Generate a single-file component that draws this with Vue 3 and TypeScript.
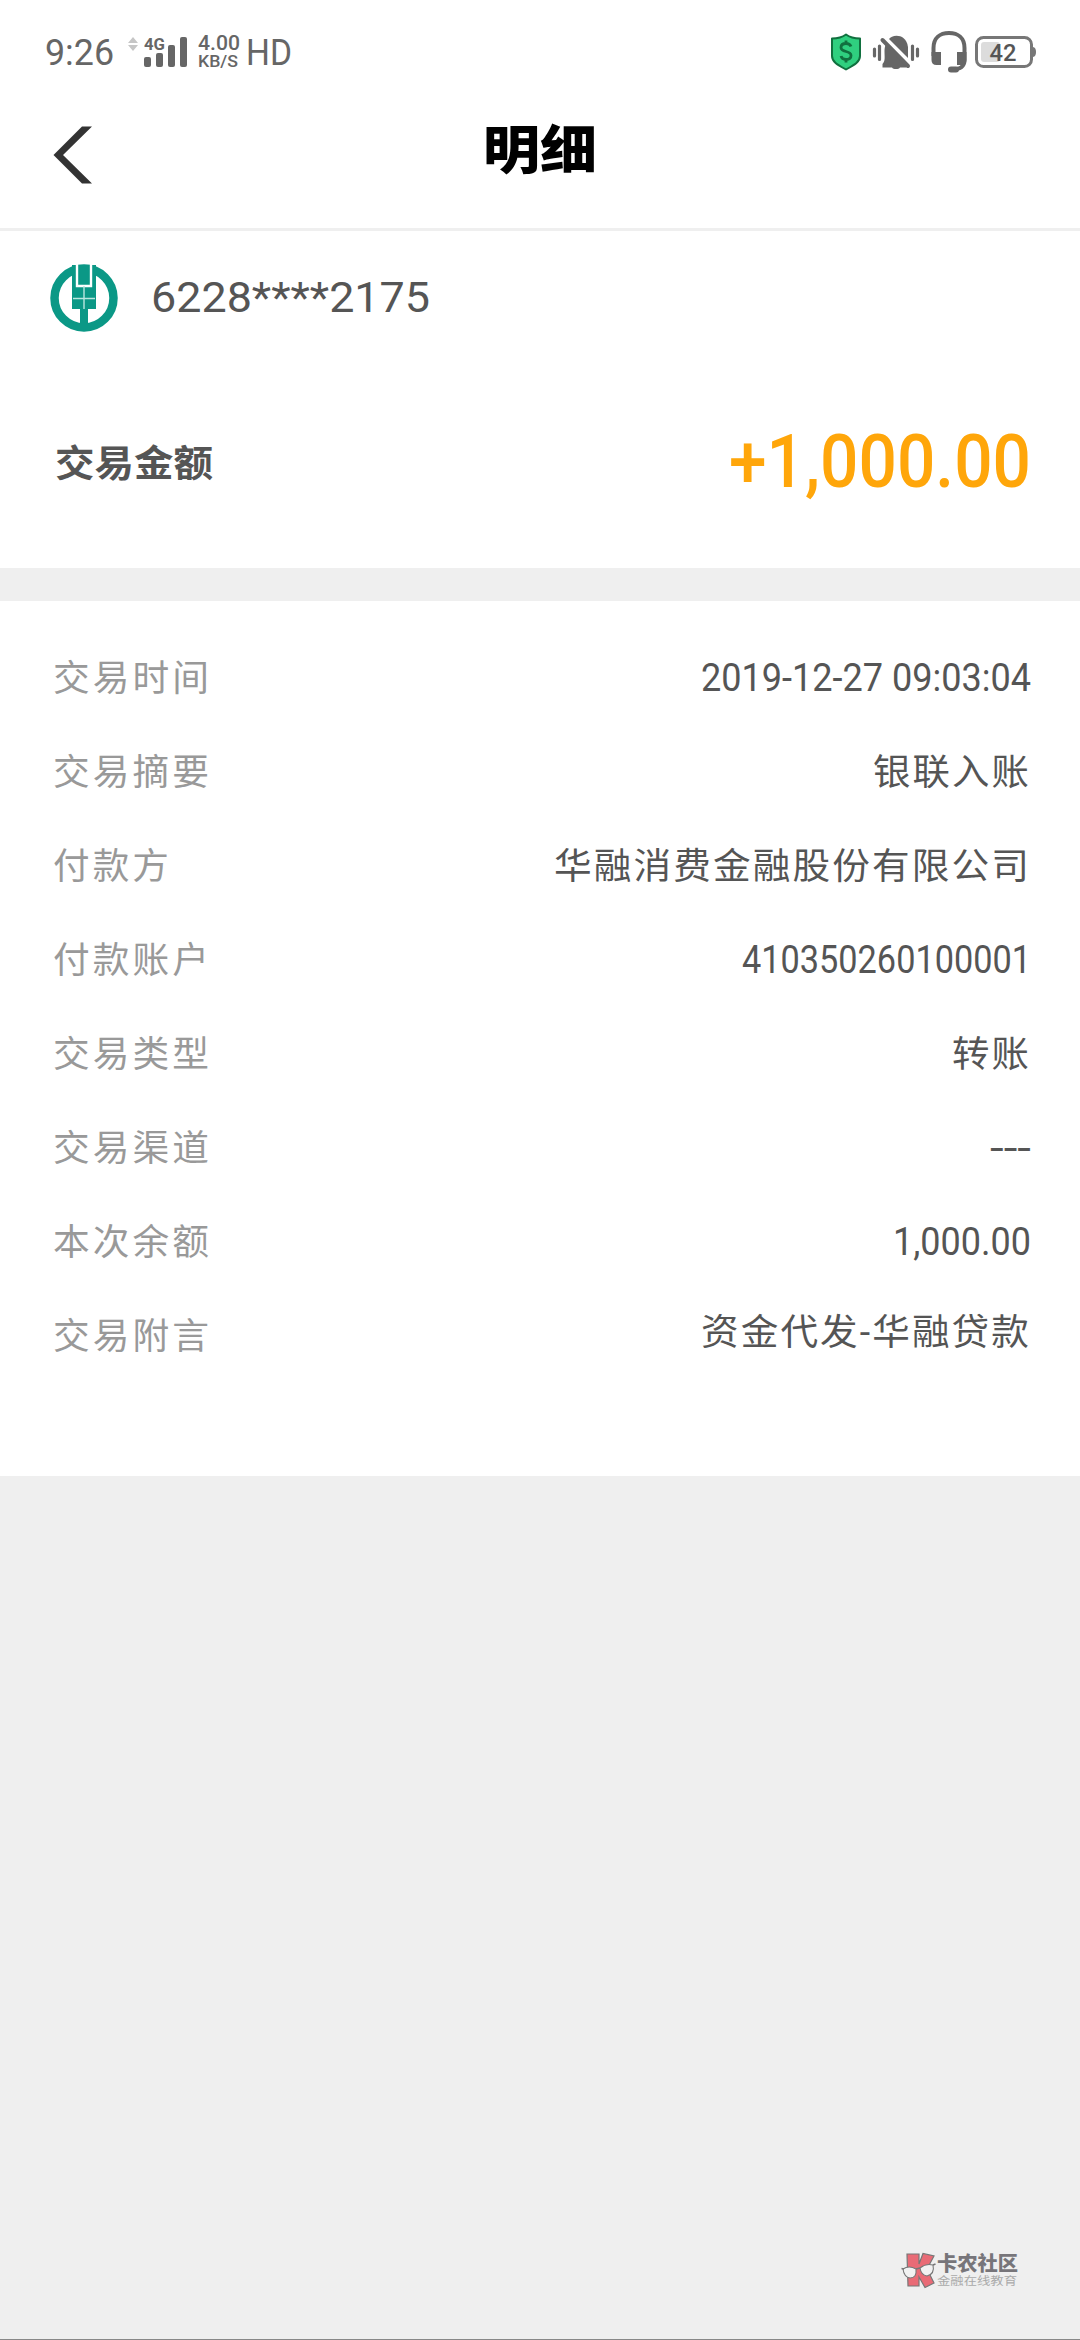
<script setup lang="ts">
import type { Directive } from 'vue'

interface Row {
  label: string
  labelWidth: number
  value: string
  width: number
  numeric?: boolean
  raised?: boolean
}

const rows: Row[] = [
  { label: '交易时间', labelWidth: 159, value: '2019-12-27 09:03:04', width: 330, numeric: true },
  { label: '交易摘要', labelWidth: 159, value: '银联入账', width: 158 },
  { label: '付款方', labelWidth: 119, value: '华融消费金融股份有限公司', width: 477 },
  { label: '付款账户', labelWidth: 159, value: '410350260100001', width: 289, numeric: true },
  { label: '交易类型', labelWidth: 159, value: '转账', width: 79 },
  { label: '交易渠道', labelWidth: 159, value: '---', width: 41, numeric: true },
  { label: '本次余额', labelWidth: 159, value: '1,000.00', width: 138, numeric: true },
  { label: '交易附言', labelWidth: 159, value: '资金代发-华融贷款', width: 330, raised: true },
]

// Condenses or widens a run of text so that it occupies the given width.
const vFit: Directive<HTMLElement, number> = {
  mounted(el, { value }) {
    const natural = el.getBoundingClientRect().width
    el.style.transformOrigin = 'left center'
    el.style.transform = `scaleX(${value / natural})`
    el.style.marginRight = `${value - natural}px`
  },
}
</script>

<template>
  <div class="screen">
    <header class="status">
      <div class="status-left">
        <span v-fit="69" class="clock">9:26</span>
        <svg class="arrows" width="12" height="34" viewBox="0 0 12 34">
          <path d="M1 8L6 2L11 8ZM1 10L6 16L11 10Z" fill="#c6c6c6" />
        </svg>
        <div class="signal">
          <span v-fit="21" class="network">4G</span>
          <svg width="45" height="32" viewBox="0 0 45 32">
            <rect x="0" y="21" width="7" height="10" rx="2" />
            <rect x="12" y="17" width="7" height="14" rx="2" />
            <rect x="24" y="9" width="7" height="22" rx="2" />
            <rect x="36" y="1" width="7" height="30" rx="2" />
          </svg>
        </div>
        <div class="speed">
          <span v-fit="42" class="rate">4.00</span>
          <span v-fit="40" class="unit">KB/S</span>
        </div>
        <span v-fit="46" class="hd">HD</span>
      </div>
      <div class="status-right">
        <svg width="32" height="38" viewBox="0 0 32 38">
          <path d="M16 1.5C20 4.5 25 5.500 30 5.500V23C30 29 24 32 16 36.500C8 32 2 29 2 23V5.500C7 5.500 12 4.500 16 1.500Z" fill="#2fcf7f" stroke="#11703f" stroke-width="2" stroke-linejoin="round" />
          <path d="M21 13.500C20 11 18 10.500 16 10.500C13 10.500 11 12 11 14.500C11 20 21 17 21 22.500C21 25 19 26.500 16 26.500C13 26.500 11.500 25 11 23M16 7.500V11M16 26V29.500" fill="none" stroke="#11703f" stroke-width="2.800" />
        </svg>
        <svg class="bell" width="48" height="38" viewBox="0 0 48 38">
          <path d="M10 7L37 33L34 34.500H28C27 36.500 21 36.500 20 34.500H10.500V31C13.500 28 12.500 24 12.500 18C12.500 15 13 13 14 11Z" fill="#666" />
          <path d="M17 6C20 1.500 34 0 36 14V25Z" fill="#666" />
          <path d="M10.500 7L36 33" stroke="#666" stroke-width="4" stroke-linecap="round" />
          <path d="M2.500 16V23M7.500 13V26.500M40.500 13V26.500M45.500 16V23" stroke="#666" stroke-width="3.200" stroke-linecap="round" />
        </svg>
        <svg class="headset" width="38" height="44" viewBox="0 0 38 44">
          <path d="M3.500 26V18C3.500 8 10 3 19 3S34.500 8 34.500 18V30C34.500 37 30 39.500 21 39.500" fill="none" stroke="#666" stroke-width="4" />
          <path d="M1.500 22H11V35H6.500Q1.500 35 1.500 30ZM27 22H36.500V30Q36.500 35 31.500 35H27Z" fill="#666" />
          <rect x="18" y="36.500" width="11" height="6" rx="3" fill="#666" />
        </svg>
        <svg class="battery" width="62" height="34" viewBox="0 0 62 34">
          <rect x="1.500" y="2.500" width="55" height="29" rx="7" fill="none" stroke="#777" stroke-width="3" />
          <path d="M58 12Q61 12.500 61 17T58 22Z" fill="#777" />
          <rect x="6" y="7" width="19" height="20" rx="3" fill="#dcdcdc" />
          <text x="14.500" y="25.500" font-size="24" font-weight="500" textLength="27" lengthAdjust="spacingAndGlyphs" fill="#555">42</text>
        </svg>
      </div>
    </header>

    <nav class="nav">
      <svg class="back" width="40" height="58" viewBox="0 0 40 58">
        <path d="M29 .5H39L10 29L39 57.500H29L.5 29Z" fill="#333" />
      </svg>
      <h1 v-fit="114">明细</h1>
    </nav>

    <section class="account">
      <div class="card">
        <svg width="68" height="68" viewBox="0 0 68 68">
          <circle cx="34" cy="34" r="29.500" fill="#fff" stroke="#0b9886" stroke-width="8.500" />
          <path d="M22 1H46V45H38V63H30V45H22Z" fill="#0b9886" />
          <path d="M27 0V22H41V0" fill="none" stroke="#fff" stroke-width="2.400" />
          <path d="M34 22V45M23 34.500H45" fill="none" stroke="#b9e6df" stroke-width="1.400" />
        </svg>
        <span v-fit="279" class="card-number">6228****2175</span>
      </div>
      <div class="amount">
        <span v-fit="158" class="amount-label">交易金额</span>
        <span v-fit="302" class="amount-value">+1,000.00</span>
      </div>
    </section>

    <section class="details">
      <div v-for="row in rows" :key="row.label" class="row">
        <span v-fit="row.labelWidth" class="label">{{ row.label }}</span>
        <span v-fit="row.width" class="value" :class="{ numeric: row.numeric, raised: row.raised }">{{ row.value }}</span>
      </div>
    </section>

    <footer class="footer">
      <div class="brand">
        <svg width="36" height="37" viewBox="0 0 36 37">
          <path d="M6 2H18V12L22 1.500L33 4L26 17L33 31L24 35.500L18 25V34H7Z" fill="#e96b76" stroke="#777" stroke-width="1.200" />
          <path d="M2 17Q8 13 15 17Q16 26 9 26Q3 25 2 17ZM19 16Q25 11 32 13Q34 22 26 24Q20 23 19 16Z" fill="#f2f2f2" stroke="#777" stroke-width="1.100" />
          <path d="M.5 16.500L3 17M15 17L19 16M32 13L34.500 12" stroke="#777" stroke-width="1.500" />
        </svg>
        <div class="brand-text">
          <span v-fit="81" class="brand-name">卡农社区</span>
          <span v-fit="80" class="brand-tag">金融在线教育</span>
        </div>
      </div>
    </footer>
  </div>
</template>

<style>
body {
  margin: 0;
  background: #efefef;
}
</style>

<style scoped>
.screen {
  display: flex;
  flex-direction: column;
  box-sizing: border-box;
  width: 1080px;
  height: 2340px;
  overflow: hidden;
  background: #efefef;
  border-bottom: 1px solid #888;
  color: #555;
  font-family: Roboto, "Noto Sans CJK SC", sans-serif;
}
span,
h1 {
  display: inline-block;
  flex: none;
  white-space: nowrap;
}
svg {
  display: block;
  flex: none;
}
.status {
  display: flex;
  justify-content: space-between;
  box-sizing: border-box;
  height: 104px;
  padding: 0 43px 0 45px;
  background: #fff;
  color: #666;
}
.status-left,
.status-right {
  display: flex;
  align-items: center;
  height: 104px;
}
.clock,
.hd {
  position: relative;
  top: 1px;
  font-size: 36px;
  line-height: 40px;
}
.arrows {
  margin-left: 13px;
}
.signal {
  position: relative;
  margin-left: 5px;
  fill: #666;
}
.network {
  position: absolute;
  top: 0;
  left: 0;
  font-size: 17px;
  line-height: 17px;
  font-weight: 700;
}
.speed {
  display: flex;
  flex-direction: column;
  align-items: flex-start;
  width: 42px;
  margin: 0 6px 0 9px;
  font-weight: 500;
}
.rate {
  font-size: 21px;
  line-height: 19px;
}
.unit {
  font-size: 17px;
  line-height: 17px;
}
.bell {
  margin-left: 10px;
}
.headset {
  margin-left: 10px;
}
.battery {
  margin-left: 7px;
}
.nav {
  display: flex;
  align-items: flex-start;
  box-sizing: border-box;
  height: 127px;
  padding: 22px 0 0 53px;
  background: #fff;
  border-bottom: 3px solid #efefef;
}
h1 {
  margin: 1px 0 0 390px;
  color: #000;
  font-size: 52px;
  line-height: 50px;
  font-weight: 900;
}
.account {
  height: 337px;
  background: #fff;
}
.card {
  display: flex;
  align-items: center;
  height: 133px;
  padding-left: 50px;
}
.card-number {
  margin-left: 33px;
  font-size: 42px;
}
.amount {
  display: flex;
  align-items: center;
  justify-content: space-between;
  height: 194px;
  padding: 0 49px 0 55px;
}
.amount-label {
  font-size: 37px;
  font-weight: 700;
}
.amount-value {
  color: #ffa60a;
  font-size: 75px;
  font-weight: 500;
}
.details {
  box-sizing: border-box;
  height: 875px;
  margin-top: 33px;
  padding: 27px 49px 0 53px;
  background: #fff;
}
.row {
  display: flex;
  align-items: center;
  justify-content: space-between;
  height: 94px;
}
.label {
  color: #999;
  font-size: 36px;
  letter-spacing: 3px;
}
.value {
  margin-left: auto;
  font-size: 36px;
  letter-spacing: 2px;
}
.numeric {
  position: relative;
  top: 3px;
  font-size: 39px;
  letter-spacing: 0;
}
.raised {
  position: relative;
  top: -4px;
}
.footer {
  display: flex;
  flex: 1;
  align-items: flex-end;
  justify-content: flex-end;
  padding: 0 62px 50px 0;
}
.brand {
  display: flex;
  align-items: center;
}
.brand-text {
  display: flex;
  flex-direction: column;
  width: 81px;
  align-items: flex-start;
}
.brand-name {
  color: #77757a;
  font-size: 20px;
  line-height: 22px;
  font-weight: 900;
}
.brand-tag {
  color: #aaa;
  font-size: 11px;
  line-height: 13px;
}
</style>
